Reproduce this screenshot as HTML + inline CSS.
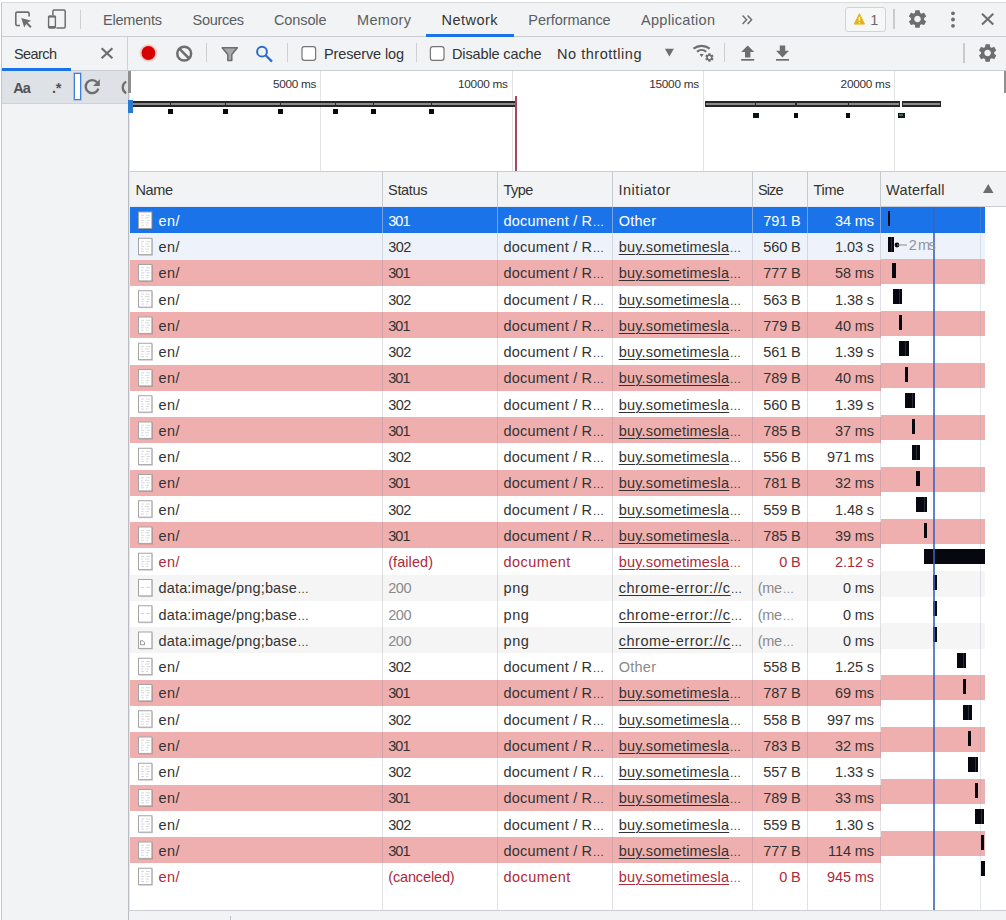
<!DOCTYPE html>
<html lang="en"><head><meta charset="utf-8"><title>DevTools - Network</title>
<style>
html,body{margin:0;padding:0;background:#fff}
#root{position:relative;width:1006px;height:920px;overflow:hidden;background:#fff;font-family:'Liberation Sans',sans-serif}
#root div,#root span,#root svg{position:absolute}
#root span{white-space:pre}
#root i{font-style:normal;font-size:11.7px;letter-spacing:0}
#root u{text-decoration:underline;text-underline-offset:1.5px;text-decoration-thickness:1px}
</style></head><body>
<div id="root">
<div style="left:1px;top:2px;width:1005px;height:918px;background:#f1f3f4;"></div>
<div style="left:1px;top:2px;width:1px;height:918px;background:#c4c4c4;"></div>
<div style="left:1px;top:2px;width:1005px;height:1px;background:#dadada;"></div>
<div style="left:2px;top:36px;width:1004px;height:1px;background:#cacdd1;"></div>
<div style="left:2px;top:70px;width:1004px;height:1px;background:#cacdd1;"></div>
<div style="left:2px;top:71px;width:126px;height:32px;background:#dee1e6;"></div>
<div style="left:2px;top:103px;width:126px;height:1px;background:#cfd2d6;"></div>
<div style="left:2px;top:68px;width:69px;height:3px;background:#1a73e8;"></div>
<div style="left:426px;top:34px;width:88px;height:3px;background:#1a73e8;"></div>
<div style="left:128px;top:71px;width:878px;height:840px;background:#fff;"></div>
<div style="left:128px;top:71px;width:1px;height:849px;background:#b9bcc0;"></div>
<div style="left:129px;top:71px;width:1px;height:840px;background:#e4e7ec;"></div>
<div style="left:128px;top:71px;width:3px;height:22px;background:#8f8f8f;"></div>
<div style="left:1004px;top:71px;width:2px;height:22px;background:#8f8f8f;"></div>
<div style="left:320px;top:71px;width:1px;height:100px;background:#e3e3e3;"></div>
<div style="left:512px;top:71px;width:1px;height:100px;background:#e3e3e3;"></div>
<div style="left:703px;top:71px;width:1px;height:100px;background:#e3e3e3;"></div>
<div style="left:894px;top:71px;width:1px;height:100px;background:#e3e3e3;"></div>
<div style="left:130px;top:171px;width:876px;height:1.6px;background:#cacdd1;"></div>
<div style="left:131px;top:101.4px;width:385.6px;height:5.5px;background:#262626;"></div>
<div style="left:132.2px;top:102.8px;width:383.20000000000005px;height:2.6px;background:#8a8a8a;"></div>
<div style="left:704.5px;top:101.4px;width:195.79999999999995px;height:5.5px;background:#262626;"></div>
<div style="left:705.7px;top:102.8px;width:193.39999999999995px;height:2.6px;background:#8a8a8a;"></div>
<div style="left:902px;top:101.4px;width:39px;height:5.5px;background:#262626;"></div>
<div style="left:903.2px;top:102.8px;width:36.6px;height:2.6px;background:#8a8a8a;"></div>
<div style="left:170.0px;top:101.5px;width:1.4px;height:5.2px;background:#2b2b2b;"></div>
<div style="left:224.6px;top:101.5px;width:1.4px;height:5.2px;background:#2b2b2b;"></div>
<div style="left:279.7px;top:101.5px;width:1.4px;height:5.2px;background:#2b2b2b;"></div>
<div style="left:334.7px;top:101.5px;width:1.4px;height:5.2px;background:#2b2b2b;"></div>
<div style="left:372.59999999999997px;top:101.5px;width:1.4px;height:5.2px;background:#2b2b2b;"></div>
<div style="left:430.59999999999997px;top:101.5px;width:1.4px;height:5.2px;background:#2b2b2b;"></div>
<div style="left:755.0px;top:101.5px;width:1.4px;height:5.2px;background:#2b2b2b;"></div>
<div style="left:795.4px;top:101.5px;width:1.4px;height:5.2px;background:#2b2b2b;"></div>
<div style="left:847.6px;top:101.5px;width:1.4px;height:5.2px;background:#2b2b2b;"></div>
<div style="left:168.29999999999998px;top:109px;width:4.8px;height:5.4px;background:#0a0a0a;"></div>
<div style="left:222.79999999999998px;top:109px;width:4.8px;height:5.4px;background:#0a0a0a;"></div>
<div style="left:277.90000000000003px;top:109px;width:4.8px;height:5.4px;background:#0a0a0a;"></div>
<div style="left:332.90000000000003px;top:109px;width:4.8px;height:5.4px;background:#0a0a0a;"></div>
<div style="left:370.8px;top:109px;width:4.8px;height:5.4px;background:#0a0a0a;"></div>
<div style="left:428.8px;top:109px;width:4.8px;height:5.4px;background:#0a0a0a;"></div>
<div style="left:752.9px;top:112.7px;width:5.9px;height:5.2px;background:#0c1410;"></div>
<div style="left:793.7px;top:112.7px;width:4.4px;height:5.2px;background:#0a0a0a;"></div>
<div style="left:845.9px;top:112.7px;width:4.6px;height:5.2px;background:#0a0a0a;"></div>
<div style="left:897.6px;top:112.7px;width:7.2px;height:5.2px;background:#0e1a15;"></div>
<div style="left:899.4px;top:114.1px;width:3.8px;height:2.4px;background:#2f6e50;"></div>
<div style="left:128px;top:100px;width:5px;height:13px;background:#2a7bd0;"></div>
<div style="left:514.5px;top:96px;width:2px;height:75px;background:#a6485f;"></div>
<div style="left:130px;top:172px;width:876px;height:34.5px;background:#f1f3f4;"></div>
<div style="left:130px;top:206px;width:751px;height:1px;background:#e6e9ee;"></div>
<div style="left:881px;top:206px;width:125px;height:1px;background:#cacdd1;"></div>
<div style="left:130px;top:207.0px;width:751px;height:26.25px;background:#1a73e8;"></div>
<div style="left:881px;top:207px;width:104px;height:26px;background:#1a73e8;"></div>
<div style="left:130px;top:233.25px;width:751px;height:26.25px;background:#eef2fa;"></div>
<div style="left:881px;top:233px;width:104px;height:26px;background:#eef2fa;"></div>
<div style="left:130px;top:259.5px;width:751px;height:26.25px;background:#f0afaf;"></div>
<div style="left:881px;top:259px;width:104px;height:25px;background:#f0afaf;"></div>
<div style="left:130px;top:312.0px;width:751px;height:26.25px;background:#f0afaf;"></div>
<div style="left:881px;top:311px;width:104px;height:25px;background:#f0afaf;"></div>
<div style="left:130px;top:364.5px;width:751px;height:26.25px;background:#f0afaf;"></div>
<div style="left:881px;top:363px;width:104px;height:25px;background:#f0afaf;"></div>
<div style="left:130px;top:417.0px;width:751px;height:26.25px;background:#f0afaf;"></div>
<div style="left:881px;top:415px;width:104px;height:25px;background:#f0afaf;"></div>
<div style="left:130px;top:469.5px;width:751px;height:26.25px;background:#f0afaf;"></div>
<div style="left:881px;top:467px;width:104px;height:25px;background:#f0afaf;"></div>
<div style="left:130px;top:522.0px;width:751px;height:26.25px;background:#f0afaf;"></div>
<div style="left:881px;top:519px;width:104px;height:25px;background:#f0afaf;"></div>
<div style="left:130px;top:574.5px;width:751px;height:26.25px;background:#f5f5f5;"></div>
<div style="left:881px;top:571px;width:104px;height:26px;background:#f5f5f5;"></div>
<div style="left:130px;top:627.0px;width:751px;height:26.25px;background:#f5f5f5;"></div>
<div style="left:881px;top:623px;width:104px;height:26px;background:#f5f5f5;"></div>
<div style="left:130px;top:679.5px;width:751px;height:26.25px;background:#f0afaf;"></div>
<div style="left:881px;top:675px;width:104px;height:25px;background:#f0afaf;"></div>
<div style="left:130px;top:732.0px;width:751px;height:26.25px;background:#f0afaf;"></div>
<div style="left:881px;top:727px;width:104px;height:25px;background:#f0afaf;"></div>
<div style="left:130px;top:784.5px;width:751px;height:26.25px;background:#f0afaf;"></div>
<div style="left:881px;top:779px;width:104px;height:25px;background:#f0afaf;"></div>
<div style="left:130px;top:837.0px;width:751px;height:26.25px;background:#f0afaf;"></div>
<div style="left:881px;top:831px;width:104px;height:25px;background:#f0afaf;"></div>
<div style="left:382px;top:172px;width:1px;height:35px;background:#c6c9cd;"></div>
<div style="left:382px;top:207px;width:1px;height:703px;background:rgba(120,120,130,0.22);"></div>
<div style="left:382px;top:207px;width:1px;height:26.25px;background:rgba(255,255,255,0.35);"></div>
<div style="left:497px;top:172px;width:1px;height:35px;background:#c6c9cd;"></div>
<div style="left:497px;top:207px;width:1px;height:703px;background:rgba(120,120,130,0.22);"></div>
<div style="left:497px;top:207px;width:1px;height:26.25px;background:rgba(255,255,255,0.35);"></div>
<div style="left:612px;top:172px;width:1px;height:35px;background:#c6c9cd;"></div>
<div style="left:612px;top:207px;width:1px;height:703px;background:rgba(120,120,130,0.22);"></div>
<div style="left:612px;top:207px;width:1px;height:26.25px;background:rgba(255,255,255,0.35);"></div>
<div style="left:752px;top:172px;width:1px;height:35px;background:#c6c9cd;"></div>
<div style="left:752px;top:207px;width:1px;height:703px;background:rgba(120,120,130,0.22);"></div>
<div style="left:752px;top:207px;width:1px;height:26.25px;background:rgba(255,255,255,0.35);"></div>
<div style="left:807px;top:172px;width:1px;height:35px;background:#c6c9cd;"></div>
<div style="left:807px;top:207px;width:1px;height:703px;background:rgba(120,120,130,0.22);"></div>
<div style="left:807px;top:207px;width:1px;height:26.25px;background:rgba(255,255,255,0.35);"></div>
<div style="left:880px;top:172px;width:1px;height:35px;background:#c6c9cd;"></div>
<div style="left:880px;top:207px;width:1px;height:703px;background:rgba(120,120,130,0.22);"></div>
<div style="left:880px;top:207px;width:1px;height:26.25px;background:rgba(255,255,255,0.35);"></div>
<div style="left:980px;top:207px;width:1px;height:703px;background:rgba(150,160,190,0.25);"></div>
<div style="left:128px;top:910px;width:878px;height:1px;background:#cacdd1;"></div>
<div style="left:129px;top:911px;width:877px;height:9px;background:#f1f3f4;"></div>
<div style="left:230px;top:916px;width:1px;height:4px;background:#c0c3c7;"></div>
<div style="left:887.7px;top:211px;width:2.3px;height:15px;background:#07070f;"></div>
<div style="left:887.7px;top:237px;width:6.8px;height:15px;background:#07070f;"></div>
<div style="left:891.3px;top:237px;width:1px;height:15px;background:#2a2d3a;"></div>
<div style="left:891.6px;top:263px;width:4.0px;height:15px;background:#07070f;"></div>
<div style="left:892.6px;top:289px;width:9.5px;height:15px;background:#07070f;"></div>
<div style="left:898.9px;top:289px;width:1px;height:15px;background:#2a2d3a;"></div>
<div style="left:899px;top:315px;width:3px;height:15px;background:#07070f;"></div>
<div style="left:899px;top:341px;width:9.5px;height:15px;background:#07070f;"></div>
<div style="left:905.3px;top:341px;width:1px;height:15px;background:#2a2d3a;"></div>
<div style="left:905.2px;top:367px;width:3.1px;height:15px;background:#07070f;"></div>
<div style="left:905.2px;top:393px;width:9.5px;height:15px;background:#07070f;"></div>
<div style="left:911.5px;top:393px;width:1px;height:15px;background:#2a2d3a;"></div>
<div style="left:911.7px;top:419px;width:3.2px;height:15px;background:#07070f;"></div>
<div style="left:911.7px;top:445px;width:7.9px;height:15px;background:#07070f;"></div>
<div style="left:916.4px;top:445px;width:1px;height:15px;background:#2a2d3a;"></div>
<div style="left:916.4px;top:471px;width:3.2px;height:15px;background:#07070f;"></div>
<div style="left:916.4px;top:497px;width:11.0px;height:15px;background:#07070f;"></div>
<div style="left:924.2px;top:497px;width:1px;height:15px;background:#2a2d3a;"></div>
<div style="left:924.2px;top:523px;width:3.2px;height:15px;background:#07070f;"></div>
<div style="left:923.9px;top:549px;width:60.9px;height:15px;background:#07070f;"></div>
<div style="left:933.4px;top:575px;width:4.0px;height:15px;background:#07070f;"></div>
<div style="left:933.4px;top:601px;width:4.0px;height:15px;background:#07070f;"></div>
<div style="left:933.4px;top:627px;width:4.0px;height:15px;background:#07070f;"></div>
<div style="left:956.8px;top:653px;width:9.7px;height:15px;background:#07070f;"></div>
<div style="left:963.3px;top:653px;width:1px;height:15px;background:#2a2d3a;"></div>
<div style="left:963.4px;top:679px;width:3.1px;height:15px;background:#07070f;"></div>
<div style="left:963.4px;top:705px;width:8.2px;height:15px;background:#07070f;"></div>
<div style="left:968.4px;top:705px;width:1px;height:15px;background:#2a2d3a;"></div>
<div style="left:968.4px;top:731px;width:2.9px;height:15px;background:#07070f;"></div>
<div style="left:968.4px;top:757px;width:9.3px;height:15px;background:#07070f;"></div>
<div style="left:974.5px;top:757px;width:1px;height:15px;background:#2a2d3a;"></div>
<div style="left:974.5px;top:783px;width:3.2px;height:15px;background:#07070f;"></div>
<div style="left:974.5px;top:809px;width:9.5px;height:15px;background:#07070f;"></div>
<div style="left:980.8px;top:809px;width:1px;height:15px;background:#2a2d3a;"></div>
<div style="left:980.8px;top:835px;width:3.7px;height:15px;background:#07070f;"></div>
<div style="left:981px;top:861px;width:4px;height:15px;background:#07070f;"></div>
<div style="left:933px;top:207px;width:2px;height:703px;background:rgba(58,98,188,0.8);"></div>
<div style="left:80px;top:9.5px;width:1px;height:19px;background:#cfcfcf;"></div>
<div style="left:845px;top:7px;width:39px;height:23px;border:1px solid #d3d3d3;border-radius:3px;background:#f6f7f7"></div>
<div style="left:893px;top:9px;width:2px;height:19.5px;background:#cbcbcb;"></div>
<div style="left:127px;top:37px;width:1px;height:34px;background:#cdd0d4;"></div>
<div style="left:206px;top:43.3px;width:1px;height:18.7px;background:#cfcfcf;"></div>
<div style="left:287px;top:43.3px;width:1px;height:18.7px;background:#cfcfcf;"></div>
<div style="left:416px;top:43.3px;width:1px;height:18.7px;background:#cfcfcf;"></div>
<div style="left:724px;top:43.3px;width:1px;height:18.7px;background:#cfcfcf;"></div>
<div style="left:963.4px;top:43.3px;width:1.5px;height:19.4px;background:#cbcbcb;"></div>
<div style="left:73.5px;top:72.5px;width:5.4px;height:25.4px;border:1px solid #3f7fdc;background:#fff;box-shadow:0 0 0 0.6px rgba(63,127,220,.5)"></div>
<svg width="1006" height="920" viewBox="0 0 1006 920" style="left:0;top:0">
<path d="M983 192.9 L993.5 192.9 L988.25 184 Z" fill="#6c6c6c"/>
<g transform="translate(138,211.3)"><rect x="1.2" y="1.4" width="13.8" height="16.8" fill="rgba(0,0,0,0.16)"/><rect x="0.5" y="0.7" width="13.4" height="16.4" fill="#fff" stroke="#a4a4a4" stroke-width="1"/><path d="M3 4 H6 M8 4 H12 M3 6.5 H5 M7 6.5 H11.5 M3 9 H6.5 M8.5 9 H12 M3 11.5 H5.5 M7.5 11.5 H11 M3 14 H6 M8 14 H10" stroke="#d9d9d9" stroke-width="1"/></g>
<g transform="translate(138,237.55)"><rect x="1.2" y="1.4" width="13.8" height="16.8" fill="rgba(0,0,0,0.16)"/><rect x="0.5" y="0.7" width="13.4" height="16.4" fill="#fff" stroke="#a4a4a4" stroke-width="1"/><path d="M3 4 H6 M8 4 H12 M3 6.5 H5 M7 6.5 H11.5 M3 9 H6.5 M8.5 9 H12 M3 11.5 H5.5 M7.5 11.5 H11 M3 14 H6 M8 14 H10" stroke="#d9d9d9" stroke-width="1"/></g>
<g transform="translate(138,263.8)"><rect x="1.2" y="1.4" width="13.8" height="16.8" fill="rgba(0,0,0,0.16)"/><rect x="0.5" y="0.7" width="13.4" height="16.4" fill="#fff" stroke="#a4a4a4" stroke-width="1"/><path d="M3 4 H6 M8 4 H12 M3 6.5 H5 M7 6.5 H11.5 M3 9 H6.5 M8.5 9 H12 M3 11.5 H5.5 M7.5 11.5 H11 M3 14 H6 M8 14 H10" stroke="#d9d9d9" stroke-width="1"/></g>
<g transform="translate(138,290.05)"><rect x="1.2" y="1.4" width="13.8" height="16.8" fill="rgba(0,0,0,0.16)"/><rect x="0.5" y="0.7" width="13.4" height="16.4" fill="#fff" stroke="#a4a4a4" stroke-width="1"/><path d="M3 4 H6 M8 4 H12 M3 6.5 H5 M7 6.5 H11.5 M3 9 H6.5 M8.5 9 H12 M3 11.5 H5.5 M7.5 11.5 H11 M3 14 H6 M8 14 H10" stroke="#d9d9d9" stroke-width="1"/></g>
<g transform="translate(138,316.3)"><rect x="1.2" y="1.4" width="13.8" height="16.8" fill="rgba(0,0,0,0.16)"/><rect x="0.5" y="0.7" width="13.4" height="16.4" fill="#fff" stroke="#a4a4a4" stroke-width="1"/><path d="M3 4 H6 M8 4 H12 M3 6.5 H5 M7 6.5 H11.5 M3 9 H6.5 M8.5 9 H12 M3 11.5 H5.5 M7.5 11.5 H11 M3 14 H6 M8 14 H10" stroke="#d9d9d9" stroke-width="1"/></g>
<g transform="translate(138,342.55)"><rect x="1.2" y="1.4" width="13.8" height="16.8" fill="rgba(0,0,0,0.16)"/><rect x="0.5" y="0.7" width="13.4" height="16.4" fill="#fff" stroke="#a4a4a4" stroke-width="1"/><path d="M3 4 H6 M8 4 H12 M3 6.5 H5 M7 6.5 H11.5 M3 9 H6.5 M8.5 9 H12 M3 11.5 H5.5 M7.5 11.5 H11 M3 14 H6 M8 14 H10" stroke="#d9d9d9" stroke-width="1"/></g>
<g transform="translate(138,368.8)"><rect x="1.2" y="1.4" width="13.8" height="16.8" fill="rgba(0,0,0,0.16)"/><rect x="0.5" y="0.7" width="13.4" height="16.4" fill="#fff" stroke="#a4a4a4" stroke-width="1"/><path d="M3 4 H6 M8 4 H12 M3 6.5 H5 M7 6.5 H11.5 M3 9 H6.5 M8.5 9 H12 M3 11.5 H5.5 M7.5 11.5 H11 M3 14 H6 M8 14 H10" stroke="#d9d9d9" stroke-width="1"/></g>
<g transform="translate(138,395.05)"><rect x="1.2" y="1.4" width="13.8" height="16.8" fill="rgba(0,0,0,0.16)"/><rect x="0.5" y="0.7" width="13.4" height="16.4" fill="#fff" stroke="#a4a4a4" stroke-width="1"/><path d="M3 4 H6 M8 4 H12 M3 6.5 H5 M7 6.5 H11.5 M3 9 H6.5 M8.5 9 H12 M3 11.5 H5.5 M7.5 11.5 H11 M3 14 H6 M8 14 H10" stroke="#d9d9d9" stroke-width="1"/></g>
<g transform="translate(138,421.3)"><rect x="1.2" y="1.4" width="13.8" height="16.8" fill="rgba(0,0,0,0.16)"/><rect x="0.5" y="0.7" width="13.4" height="16.4" fill="#fff" stroke="#a4a4a4" stroke-width="1"/><path d="M3 4 H6 M8 4 H12 M3 6.5 H5 M7 6.5 H11.5 M3 9 H6.5 M8.5 9 H12 M3 11.5 H5.5 M7.5 11.5 H11 M3 14 H6 M8 14 H10" stroke="#d9d9d9" stroke-width="1"/></g>
<g transform="translate(138,447.55)"><rect x="1.2" y="1.4" width="13.8" height="16.8" fill="rgba(0,0,0,0.16)"/><rect x="0.5" y="0.7" width="13.4" height="16.4" fill="#fff" stroke="#a4a4a4" stroke-width="1"/><path d="M3 4 H6 M8 4 H12 M3 6.5 H5 M7 6.5 H11.5 M3 9 H6.5 M8.5 9 H12 M3 11.5 H5.5 M7.5 11.5 H11 M3 14 H6 M8 14 H10" stroke="#d9d9d9" stroke-width="1"/></g>
<g transform="translate(138,473.8)"><rect x="1.2" y="1.4" width="13.8" height="16.8" fill="rgba(0,0,0,0.16)"/><rect x="0.5" y="0.7" width="13.4" height="16.4" fill="#fff" stroke="#a4a4a4" stroke-width="1"/><path d="M3 4 H6 M8 4 H12 M3 6.5 H5 M7 6.5 H11.5 M3 9 H6.5 M8.5 9 H12 M3 11.5 H5.5 M7.5 11.5 H11 M3 14 H6 M8 14 H10" stroke="#d9d9d9" stroke-width="1"/></g>
<g transform="translate(138,500.05)"><rect x="1.2" y="1.4" width="13.8" height="16.8" fill="rgba(0,0,0,0.16)"/><rect x="0.5" y="0.7" width="13.4" height="16.4" fill="#fff" stroke="#a4a4a4" stroke-width="1"/><path d="M3 4 H6 M8 4 H12 M3 6.5 H5 M7 6.5 H11.5 M3 9 H6.5 M8.5 9 H12 M3 11.5 H5.5 M7.5 11.5 H11 M3 14 H6 M8 14 H10" stroke="#d9d9d9" stroke-width="1"/></g>
<g transform="translate(138,526.3)"><rect x="1.2" y="1.4" width="13.8" height="16.8" fill="rgba(0,0,0,0.16)"/><rect x="0.5" y="0.7" width="13.4" height="16.4" fill="#fff" stroke="#a4a4a4" stroke-width="1"/><path d="M3 4 H6 M8 4 H12 M3 6.5 H5 M7 6.5 H11.5 M3 9 H6.5 M8.5 9 H12 M3 11.5 H5.5 M7.5 11.5 H11 M3 14 H6 M8 14 H10" stroke="#d9d9d9" stroke-width="1"/></g>
<g transform="translate(138,552.55)"><rect x="1.2" y="1.4" width="13.8" height="16.8" fill="rgba(0,0,0,0.16)"/><rect x="0.5" y="0.7" width="13.4" height="16.4" fill="#fff" stroke="#a4a4a4" stroke-width="1"/><path d="M3 4 H6 M8 4 H12 M3 6.5 H5 M7 6.5 H11.5 M3 9 H6.5 M8.5 9 H12 M3 11.5 H5.5 M7.5 11.5 H11 M3 14 H6 M8 14 H10" stroke="#d9d9d9" stroke-width="1"/></g>
<g transform="translate(138,578.8)"><rect x="1.2" y="1.4" width="13.8" height="16.8" fill="rgba(0,0,0,0.16)"/><rect x="0.5" y="0.7" width="13.4" height="16.4" fill="#fff" stroke="#a4a4a4" stroke-width="1"/><path d="M2.5 8.5 H6.3 M8.3 8.5 H12" stroke="#d4d4d4" stroke-width="1"/></g>
<g transform="translate(138,605.05)"><rect x="1.2" y="1.4" width="13.8" height="16.8" fill="rgba(0,0,0,0.16)"/><rect x="0.5" y="0.7" width="13.4" height="16.4" fill="#fff" stroke="#a4a4a4" stroke-width="1"/><path d="M2.5 8.5 H6.3 M8.3 8.5 H12" stroke="#d4d4d4" stroke-width="1"/></g>
<g transform="translate(138,631.3)"><rect x="1.2" y="1.4" width="13.8" height="16.8" fill="rgba(0,0,0,0.16)"/><rect x="0.5" y="0.7" width="13.4" height="16.4" fill="#fff" stroke="#a4a4a4" stroke-width="1"/><path d="M2.5 13.5 V9.5 H5 L6.5 11 V13.5 Z" fill="none" stroke="#8a8a8a" stroke-width="0.9"/></g>
<g transform="translate(138,657.55)"><rect x="1.2" y="1.4" width="13.8" height="16.8" fill="rgba(0,0,0,0.16)"/><rect x="0.5" y="0.7" width="13.4" height="16.4" fill="#fff" stroke="#a4a4a4" stroke-width="1"/><path d="M3 4 H6 M8 4 H12 M3 6.5 H5 M7 6.5 H11.5 M3 9 H6.5 M8.5 9 H12 M3 11.5 H5.5 M7.5 11.5 H11 M3 14 H6 M8 14 H10" stroke="#d9d9d9" stroke-width="1"/></g>
<g transform="translate(138,683.8)"><rect x="1.2" y="1.4" width="13.8" height="16.8" fill="rgba(0,0,0,0.16)"/><rect x="0.5" y="0.7" width="13.4" height="16.4" fill="#fff" stroke="#a4a4a4" stroke-width="1"/><path d="M3 4 H6 M8 4 H12 M3 6.5 H5 M7 6.5 H11.5 M3 9 H6.5 M8.5 9 H12 M3 11.5 H5.5 M7.5 11.5 H11 M3 14 H6 M8 14 H10" stroke="#d9d9d9" stroke-width="1"/></g>
<g transform="translate(138,710.05)"><rect x="1.2" y="1.4" width="13.8" height="16.8" fill="rgba(0,0,0,0.16)"/><rect x="0.5" y="0.7" width="13.4" height="16.4" fill="#fff" stroke="#a4a4a4" stroke-width="1"/><path d="M3 4 H6 M8 4 H12 M3 6.5 H5 M7 6.5 H11.5 M3 9 H6.5 M8.5 9 H12 M3 11.5 H5.5 M7.5 11.5 H11 M3 14 H6 M8 14 H10" stroke="#d9d9d9" stroke-width="1"/></g>
<g transform="translate(138,736.3)"><rect x="1.2" y="1.4" width="13.8" height="16.8" fill="rgba(0,0,0,0.16)"/><rect x="0.5" y="0.7" width="13.4" height="16.4" fill="#fff" stroke="#a4a4a4" stroke-width="1"/><path d="M3 4 H6 M8 4 H12 M3 6.5 H5 M7 6.5 H11.5 M3 9 H6.5 M8.5 9 H12 M3 11.5 H5.5 M7.5 11.5 H11 M3 14 H6 M8 14 H10" stroke="#d9d9d9" stroke-width="1"/></g>
<g transform="translate(138,762.55)"><rect x="1.2" y="1.4" width="13.8" height="16.8" fill="rgba(0,0,0,0.16)"/><rect x="0.5" y="0.7" width="13.4" height="16.4" fill="#fff" stroke="#a4a4a4" stroke-width="1"/><path d="M3 4 H6 M8 4 H12 M3 6.5 H5 M7 6.5 H11.5 M3 9 H6.5 M8.5 9 H12 M3 11.5 H5.5 M7.5 11.5 H11 M3 14 H6 M8 14 H10" stroke="#d9d9d9" stroke-width="1"/></g>
<g transform="translate(138,788.8)"><rect x="1.2" y="1.4" width="13.8" height="16.8" fill="rgba(0,0,0,0.16)"/><rect x="0.5" y="0.7" width="13.4" height="16.4" fill="#fff" stroke="#a4a4a4" stroke-width="1"/><path d="M3 4 H6 M8 4 H12 M3 6.5 H5 M7 6.5 H11.5 M3 9 H6.5 M8.5 9 H12 M3 11.5 H5.5 M7.5 11.5 H11 M3 14 H6 M8 14 H10" stroke="#d9d9d9" stroke-width="1"/></g>
<g transform="translate(138,815.05)"><rect x="1.2" y="1.4" width="13.8" height="16.8" fill="rgba(0,0,0,0.16)"/><rect x="0.5" y="0.7" width="13.4" height="16.4" fill="#fff" stroke="#a4a4a4" stroke-width="1"/><path d="M3 4 H6 M8 4 H12 M3 6.5 H5 M7 6.5 H11.5 M3 9 H6.5 M8.5 9 H12 M3 11.5 H5.5 M7.5 11.5 H11 M3 14 H6 M8 14 H10" stroke="#d9d9d9" stroke-width="1"/></g>
<g transform="translate(138,841.3)"><rect x="1.2" y="1.4" width="13.8" height="16.8" fill="rgba(0,0,0,0.16)"/><rect x="0.5" y="0.7" width="13.4" height="16.4" fill="#fff" stroke="#a4a4a4" stroke-width="1"/><path d="M3 4 H6 M8 4 H12 M3 6.5 H5 M7 6.5 H11.5 M3 9 H6.5 M8.5 9 H12 M3 11.5 H5.5 M7.5 11.5 H11 M3 14 H6 M8 14 H10" stroke="#d9d9d9" stroke-width="1"/></g>
<g transform="translate(138,867.55)"><rect x="1.2" y="1.4" width="13.8" height="16.8" fill="rgba(0,0,0,0.16)"/><rect x="0.5" y="0.7" width="13.4" height="16.4" fill="#fff" stroke="#a4a4a4" stroke-width="1"/><path d="M3 4 H6 M8 4 H12 M3 6.5 H5 M7 6.5 H11.5 M3 9 H6.5 M8.5 9 H12 M3 11.5 H5.5 M7.5 11.5 H11 M3 14 H6 M8 14 H10" stroke="#d9d9d9" stroke-width="1"/></g>
<circle cx="897" cy="245" r="2.4" fill="#0a0a0a"/><path d="M897 245 H907" stroke="#8a8a8a" stroke-width="1"/>
<path d="M742.6 15.4 L746.6 19.7 L742.6 24 M747.6 15.4 L751.6 19.7 L747.6 24" fill="none" stroke="#6e6e6e" stroke-width="1.5"/>
<path d="M20 25.5 H17.2 a1.4 1.4 0 0 1 -1.4 -1.4 V13.5 a1.4 1.4 0 0 1 1.4 -1.4 H27.7 a1.4 1.4 0 0 1 1.4 1.4 V16.4" fill="none" stroke="#6e6e6e" stroke-width="1.6"/><path d="M21.3 18 L31.2 20.8 L27.6 22.6 L31.6 26.6 L30.2 28 L26.2 24 L24.2 27.4 Z" fill="#6e6e6e"/>
<path d="M52.9 15 V11.2 a1.2 1.2 0 0 1 1.2 -1.2 H64 a1.2 1.2 0 0 1 1.2 1.2 V26.8 a1.2 1.2 0 0 1 -1.2 1.2 H56.4" fill="none" stroke="#6e6e6e" stroke-width="1.5"/><rect x="47.9" y="15.2" width="8.2" height="13.5" rx="1.6" fill="#6e6e6e"/><rect x="49.3" y="17.6" width="5.4" height="8.4" fill="#f1f3f4"/>
<path d="M859.4 13.7 L864.5 24.1 H854.3 Z" fill="#e6b417" stroke="#e6b417" stroke-width="1" stroke-linejoin="round"/><path d="M859.4 16.8 V20.8" stroke="#fff" stroke-width="1.4"/><circle cx="859.4" cy="22.7" r="0.8" fill="#fff"/>
<path transform="translate(906.50,7.95) scale(0.917)" d="M19.14,12.94c0.04-0.3,0.06-0.61,0.06-0.94c0-0.32-0.02-0.64-0.07-0.94l2.03-1.58c0.18-0.14,0.23-0.41,0.12-0.61 l-1.92-3.32c-0.12-0.22-0.37-0.29-0.59-0.22l-2.39,0.96c-0.5-0.38-1.03-0.7-1.62-0.94L14.4,2.81c-0.04-0.24-0.24-0.41-0.48-0.41 h-3.84c-0.24,0-0.43,0.17-0.47,0.41L9.25,5.35C8.66,5.59,8.12,5.92,7.63,6.29L5.24,5.33c-0.22-0.08-0.47,0-0.59,0.22L2.74,8.87 C2.62,9.08,2.66,9.34,2.86,9.48l2.03,1.58C4.84,11.36,4.8,11.69,4.8,12s0.02,0.64,0.07,0.94l-2.03,1.58 c-0.18,0.14-0.23,0.41-0.12,0.61l1.92,3.32c0.12,0.22,0.37,0.29,0.59,0.22l2.39-0.96c0.5,0.38,1.03,0.7,1.62,0.94l0.36,2.54 c0.05,0.24,0.24,0.41,0.48,0.41h3.84c0.24,0,0.44-0.17,0.47-0.41l0.36-2.54c0.59-0.24,1.13-0.56,1.62-0.94l2.39,0.96 c0.22,0.08,0.47,0,0.59-0.22l1.92-3.32c0.12-0.22,0.07-0.47-0.12-0.61L19.14,12.94z M12,15.6c-1.98,0-3.6-1.62-3.6-3.6 s1.62-3.6,3.6-3.6s3.6,1.62,3.6,3.6S13.98,15.6,12,15.6z" fill="#6e6e6e"/>
<path transform="translate(976.60,42.00) scale(0.917)" d="M19.14,12.94c0.04-0.3,0.06-0.61,0.06-0.94c0-0.32-0.02-0.64-0.07-0.94l2.03-1.58c0.18-0.14,0.23-0.41,0.12-0.61 l-1.92-3.32c-0.12-0.22-0.37-0.29-0.59-0.22l-2.39,0.96c-0.5-0.38-1.03-0.7-1.62-0.94L14.4,2.81c-0.04-0.24-0.24-0.41-0.48-0.41 h-3.84c-0.24,0-0.43,0.17-0.47,0.41L9.25,5.35C8.66,5.59,8.12,5.92,7.63,6.29L5.24,5.33c-0.22-0.08-0.47,0-0.59,0.22L2.74,8.87 C2.62,9.08,2.66,9.34,2.86,9.48l2.03,1.58C4.84,11.36,4.8,11.69,4.8,12s0.02,0.64,0.07,0.94l-2.03,1.58 c-0.18,0.14-0.23,0.41-0.12,0.61l1.92,3.32c0.12,0.22,0.37,0.29,0.59,0.22l2.39-0.96c0.5,0.38,1.03,0.7,1.62,0.94l0.36,2.54 c0.05,0.24,0.24,0.41,0.48,0.41h3.84c0.24,0,0.44-0.17,0.47-0.41l0.36-2.54c0.59-0.24,1.13-0.56,1.62-0.94l2.39,0.96 c0.22,0.08,0.47,0,0.59-0.22l1.92-3.32c0.12-0.22,0.07-0.47-0.12-0.61L19.14,12.94z M12,15.6c-1.98,0-3.6-1.62-3.6-3.6 s1.62-3.6,3.6-3.6s3.6,1.62,3.6,3.6S13.98,15.6,12,15.6z" fill="#6e6e6e"/>
<circle cx="953" cy="13.3" r="1.9" fill="#6e6e6e"/>
<circle cx="953" cy="19.5" r="1.9" fill="#6e6e6e"/>
<circle cx="953" cy="25.8" r="1.9" fill="#6e6e6e"/>
<path d="M982 13.8 L993.3 24.6 M993.3 13.8 L982 24.6" stroke="#6e6e6e" stroke-width="2.1"/>
<path d="M101.6 48.3 L112.4 58.3 M112.4 48.3 L101.6 58.3" stroke="#6e6e6e" stroke-width="2.2"/>
<circle cx="148.4" cy="53" r="8.8" fill="rgba(255,60,60,0.22)"/><circle cx="148.4" cy="53" r="6.9" fill="#d60000"/>
<circle cx="184.2" cy="53.6" r="6.95" fill="none" stroke="#6e6e6e" stroke-width="2.5"/><path d="M179.3 48.7 L189.1 58.5" stroke="#6e6e6e" stroke-width="2.5"/>
<path d="M222.2 47.8 H237.4 L231.8 54.6 V60.4 H227.8 V54.6 Z" fill="#a9a9a9" stroke="#6e6e6e" stroke-width="1.5" stroke-linejoin="round"/>
<circle cx="262" cy="51.7" r="4.9" fill="none" stroke="#2a6ad0" stroke-width="2"/><path d="M265.6 55.3 L272 61.6" stroke="#2a6ad0" stroke-width="2.3"/>
<rect x="302.0" y="46.7" width="13.6" height="13.6" rx="2.4" fill="#fff" stroke="#767676" stroke-width="1.2"/>
<rect x="430.40000000000003" y="46.7" width="13.6" height="13.6" rx="2.4" fill="#fff" stroke="#767676" stroke-width="1.2"/>
<path d="M664.9 48.8 H673.9 L669.4 56.6 Z" fill="#6e6e6e"/>
<path d="M693.5 48.7 A13.1 13.1 0 0 1 709.7 48.7 M697 51.7 A7.1 7.1 0 0 1 706.2 51.7" fill="none" stroke="#6e6e6e" stroke-width="2.1"/><path d="M699.6 54.4 Q701.6 53.2 703.6 54.4 L701.6 57 Z" fill="#6e6e6e"/>
<path transform="translate(704.12,52.22) scale(0.44)" d="M19.14,12.94c0.04-0.3,0.06-0.61,0.06-0.94c0-0.32-0.02-0.64-0.07-0.94l2.03-1.58c0.18-0.14,0.23-0.41,0.12-0.61 l-1.92-3.32c-0.12-0.22-0.37-0.29-0.59-0.22l-2.39,0.96c-0.5-0.38-1.03-0.7-1.62-0.94L14.4,2.81c-0.04-0.24-0.24-0.41-0.48-0.41 h-3.84c-0.24,0-0.43,0.17-0.47,0.41L9.25,5.35C8.66,5.59,8.12,5.92,7.63,6.29L5.24,5.33c-0.22-0.08-0.47,0-0.59,0.22L2.74,8.87 C2.62,9.08,2.66,9.34,2.86,9.48l2.03,1.58C4.84,11.36,4.8,11.69,4.8,12s0.02,0.64,0.07,0.94l-2.03,1.58 c-0.18,0.14-0.23,0.41-0.12,0.61l1.92,3.32c0.12,0.22,0.37,0.29,0.59,0.22l2.39-0.96c0.5,0.38,1.03,0.7,1.62,0.94l0.36,2.54 c0.05,0.24,0.24,0.41,0.48,0.41h3.84c0.24,0,0.44-0.17,0.47-0.41l0.36-2.54c0.59-0.24,1.13-0.56,1.62-0.94l2.39,0.96 c0.22,0.08,0.47,0,0.59-0.22l1.92-3.32c0.12-0.22,0.07-0.47-0.12-0.61L19.14,12.94z M12,15.6c-1.98,0-3.6-1.62-3.6-3.6 s1.62-3.6,3.6-3.6s3.6,1.62,3.6,3.6S13.98,15.6,12,15.6z" fill="#6e6e6e"/>
<path d="M747.7 45.4 L754.2 52 H750.4 V57.4 H745 V52 H741.2 Z" fill="#6e6e6e"/><rect x="741.2" y="59" width="13" height="1.7" fill="#6e6e6e"/>
<path d="M782.5 57.4 L789 50.8 H785.2 V45.4 H779.8 V50.8 H776 Z" fill="#6e6e6e"/><rect x="776" y="59" width="13" height="1.7" fill="#6e6e6e"/>
<path d="M97.1 82.3 A6.5 6.5 0 1 0 98.4 88.6" fill="none" stroke="#6e6e6e" stroke-width="2.4"/><path d="M99.8 79.2 V86 H93 Z" fill="#6e6e6e"/>
<path d="M126.2 81.6 A6.6 6.6 0 0 0 126.2 93.2" fill="none" stroke="#6e6e6e" stroke-width="2.2"/>
</svg>
<span style="left:273.00px;top:73.31px;font-size:11.8px;line-height:23.6px;color:#333;letter-spacing:-0.292px;">5000 ms</span>
<span style="left:458.00px;top:73.31px;font-size:11.8px;line-height:23.6px;color:#333;letter-spacing:-0.259px;">10000 ms</span>
<span style="left:649.20px;top:73.31px;font-size:11.8px;line-height:23.6px;color:#333;letter-spacing:-0.259px;">15000 ms</span>
<span style="left:840.60px;top:73.31px;font-size:11.8px;line-height:23.6px;color:#333;letter-spacing:-0.259px;">20000 ms</span>
<span style="left:135.50px;top:175.78px;font-size:14.5px;line-height:29.0px;color:#333;letter-spacing:-0.396px;">Name</span>
<span style="left:388.10px;top:175.78px;font-size:14.5px;line-height:29.0px;color:#333;letter-spacing:-0.362px;">Status</span>
<span style="left:503.60px;top:175.78px;font-size:14.5px;line-height:29.0px;color:#333;letter-spacing:-0.579px;">Type</span>
<span style="left:618.40px;top:175.78px;font-size:14.5px;line-height:29.0px;color:#333;letter-spacing:0.555px;">Initiator</span>
<span style="left:757.90px;top:175.78px;font-size:14.5px;line-height:29.0px;color:#333;letter-spacing:-0.84px;">Size</span>
<span style="left:813.60px;top:175.78px;font-size:14.5px;line-height:29.0px;color:#333;letter-spacing:-0.329px;">Time</span>
<span style="left:886.10px;top:175.78px;font-size:14.5px;line-height:29.0px;color:#333;letter-spacing:0.216px;">Waterfall</span>
<span style="left:158.50px;top:206.78px;font-size:14.5px;line-height:29.0px;color:#fff;letter-spacing:0.414px;">en/</span>
<span style="left:388.20px;top:206.78px;font-size:14.5px;line-height:29.0px;color:#fff;letter-spacing:-0.902px;">301</span>
<span style="left:503.50px;top:206.78px;font-size:14.5px;line-height:29.0px;color:#fff;letter-spacing:0.214px;">document / R<i style="margin-left:0.2px">…</i></span>
<span style="left:618.70px;top:206.78px;font-size:14.5px;line-height:29.0px;color:#fff;letter-spacing:0.259px;">Other</span>
<span style="left:763.37px;top:206.78px;font-size:14.5px;line-height:29.0px;color:#fff;letter-spacing:-0.12px;">791 B</span>
<span style="left:834.98px;top:206.78px;font-size:14.5px;line-height:29.0px;color:#fff;letter-spacing:-0.12px;">34 ms</span>
<span style="left:158.50px;top:233.03px;font-size:14.5px;line-height:29.0px;color:#333;letter-spacing:0.414px;">en/</span>
<span style="left:388.20px;top:233.03px;font-size:14.5px;line-height:29.0px;color:#333;letter-spacing:-0.502px;">302</span>
<span style="left:503.50px;top:233.03px;font-size:14.5px;line-height:29.0px;color:#333;letter-spacing:0.214px;">document / R<i style="margin-left:0.2px">…</i></span>
<span style="left:618.70px;top:233.03px;font-size:14.5px;line-height:29.0px;color:#333;letter-spacing:0.184px;"><u>buy.sometimesla</u><i style="margin-left:0.23px">…</i></span>
<span style="left:763.37px;top:233.03px;font-size:14.5px;line-height:29.0px;color:#333;letter-spacing:-0.12px;">560 B</span>
<span style="left:835.10px;top:233.03px;font-size:14.5px;line-height:29.0px;color:#333;letter-spacing:-0.12px;">1.03 s</span>
<span style="left:158.50px;top:259.28px;font-size:14.5px;line-height:29.0px;color:#333;letter-spacing:0.414px;">en/</span>
<span style="left:388.20px;top:259.28px;font-size:14.5px;line-height:29.0px;color:#333;letter-spacing:-0.902px;">301</span>
<span style="left:503.50px;top:259.28px;font-size:14.5px;line-height:29.0px;color:#333;letter-spacing:0.214px;">document / R<i style="margin-left:0.2px">…</i></span>
<span style="left:618.70px;top:259.28px;font-size:14.5px;line-height:29.0px;color:#333;letter-spacing:0.184px;"><u>buy.sometimesla</u><i style="margin-left:0.23px">…</i></span>
<span style="left:763.37px;top:259.28px;font-size:14.5px;line-height:29.0px;color:#333;letter-spacing:-0.12px;">777 B</span>
<span style="left:834.98px;top:259.28px;font-size:14.5px;line-height:29.0px;color:#333;letter-spacing:-0.12px;">58 ms</span>
<span style="left:158.50px;top:285.53px;font-size:14.5px;line-height:29.0px;color:#333;letter-spacing:0.414px;">en/</span>
<span style="left:388.20px;top:285.53px;font-size:14.5px;line-height:29.0px;color:#333;letter-spacing:-0.502px;">302</span>
<span style="left:503.50px;top:285.53px;font-size:14.5px;line-height:29.0px;color:#333;letter-spacing:0.214px;">document / R<i style="margin-left:0.2px">…</i></span>
<span style="left:618.70px;top:285.53px;font-size:14.5px;line-height:29.0px;color:#333;letter-spacing:0.184px;"><u>buy.sometimesla</u><i style="margin-left:0.23px">…</i></span>
<span style="left:763.37px;top:285.53px;font-size:14.5px;line-height:29.0px;color:#333;letter-spacing:-0.12px;">563 B</span>
<span style="left:835.10px;top:285.53px;font-size:14.5px;line-height:29.0px;color:#333;letter-spacing:-0.12px;">1.38 s</span>
<span style="left:158.50px;top:311.78px;font-size:14.5px;line-height:29.0px;color:#333;letter-spacing:0.414px;">en/</span>
<span style="left:388.20px;top:311.78px;font-size:14.5px;line-height:29.0px;color:#333;letter-spacing:-0.902px;">301</span>
<span style="left:503.50px;top:311.78px;font-size:14.5px;line-height:29.0px;color:#333;letter-spacing:0.214px;">document / R<i style="margin-left:0.2px">…</i></span>
<span style="left:618.70px;top:311.78px;font-size:14.5px;line-height:29.0px;color:#333;letter-spacing:0.184px;"><u>buy.sometimesla</u><i style="margin-left:0.23px">…</i></span>
<span style="left:763.37px;top:311.78px;font-size:14.5px;line-height:29.0px;color:#333;letter-spacing:-0.12px;">779 B</span>
<span style="left:834.98px;top:311.78px;font-size:14.5px;line-height:29.0px;color:#333;letter-spacing:-0.12px;">40 ms</span>
<span style="left:158.50px;top:338.03px;font-size:14.5px;line-height:29.0px;color:#333;letter-spacing:0.414px;">en/</span>
<span style="left:388.20px;top:338.03px;font-size:14.5px;line-height:29.0px;color:#333;letter-spacing:-0.502px;">302</span>
<span style="left:503.50px;top:338.03px;font-size:14.5px;line-height:29.0px;color:#333;letter-spacing:0.214px;">document / R<i style="margin-left:0.2px">…</i></span>
<span style="left:618.70px;top:338.03px;font-size:14.5px;line-height:29.0px;color:#333;letter-spacing:0.184px;"><u>buy.sometimesla</u><i style="margin-left:0.23px">…</i></span>
<span style="left:763.37px;top:338.03px;font-size:14.5px;line-height:29.0px;color:#333;letter-spacing:-0.12px;">561 B</span>
<span style="left:835.10px;top:338.03px;font-size:14.5px;line-height:29.0px;color:#333;letter-spacing:-0.12px;">1.39 s</span>
<span style="left:158.50px;top:364.28px;font-size:14.5px;line-height:29.0px;color:#333;letter-spacing:0.414px;">en/</span>
<span style="left:388.20px;top:364.28px;font-size:14.5px;line-height:29.0px;color:#333;letter-spacing:-0.902px;">301</span>
<span style="left:503.50px;top:364.28px;font-size:14.5px;line-height:29.0px;color:#333;letter-spacing:0.214px;">document / R<i style="margin-left:0.2px">…</i></span>
<span style="left:618.70px;top:364.28px;font-size:14.5px;line-height:29.0px;color:#333;letter-spacing:0.184px;"><u>buy.sometimesla</u><i style="margin-left:0.23px">…</i></span>
<span style="left:763.37px;top:364.28px;font-size:14.5px;line-height:29.0px;color:#333;letter-spacing:-0.12px;">789 B</span>
<span style="left:834.98px;top:364.28px;font-size:14.5px;line-height:29.0px;color:#333;letter-spacing:-0.12px;">40 ms</span>
<span style="left:158.50px;top:390.53px;font-size:14.5px;line-height:29.0px;color:#333;letter-spacing:0.414px;">en/</span>
<span style="left:388.20px;top:390.53px;font-size:14.5px;line-height:29.0px;color:#333;letter-spacing:-0.502px;">302</span>
<span style="left:503.50px;top:390.53px;font-size:14.5px;line-height:29.0px;color:#333;letter-spacing:0.214px;">document / R<i style="margin-left:0.2px">…</i></span>
<span style="left:618.70px;top:390.53px;font-size:14.5px;line-height:29.0px;color:#333;letter-spacing:0.184px;"><u>buy.sometimesla</u><i style="margin-left:0.23px">…</i></span>
<span style="left:763.37px;top:390.53px;font-size:14.5px;line-height:29.0px;color:#333;letter-spacing:-0.12px;">560 B</span>
<span style="left:835.10px;top:390.53px;font-size:14.5px;line-height:29.0px;color:#333;letter-spacing:-0.12px;">1.39 s</span>
<span style="left:158.50px;top:416.78px;font-size:14.5px;line-height:29.0px;color:#333;letter-spacing:0.414px;">en/</span>
<span style="left:388.20px;top:416.78px;font-size:14.5px;line-height:29.0px;color:#333;letter-spacing:-0.902px;">301</span>
<span style="left:503.50px;top:416.78px;font-size:14.5px;line-height:29.0px;color:#333;letter-spacing:0.214px;">document / R<i style="margin-left:0.2px">…</i></span>
<span style="left:618.70px;top:416.78px;font-size:14.5px;line-height:29.0px;color:#333;letter-spacing:0.184px;"><u>buy.sometimesla</u><i style="margin-left:0.23px">…</i></span>
<span style="left:763.37px;top:416.78px;font-size:14.5px;line-height:29.0px;color:#333;letter-spacing:-0.12px;">785 B</span>
<span style="left:834.98px;top:416.78px;font-size:14.5px;line-height:29.0px;color:#333;letter-spacing:-0.12px;">37 ms</span>
<span style="left:158.50px;top:443.03px;font-size:14.5px;line-height:29.0px;color:#333;letter-spacing:0.414px;">en/</span>
<span style="left:388.20px;top:443.03px;font-size:14.5px;line-height:29.0px;color:#333;letter-spacing:-0.502px;">302</span>
<span style="left:503.50px;top:443.03px;font-size:14.5px;line-height:29.0px;color:#333;letter-spacing:0.214px;">document / R<i style="margin-left:0.2px">…</i></span>
<span style="left:618.70px;top:443.03px;font-size:14.5px;line-height:29.0px;color:#333;letter-spacing:0.184px;"><u>buy.sometimesla</u><i style="margin-left:0.23px">…</i></span>
<span style="left:763.37px;top:443.03px;font-size:14.5px;line-height:29.0px;color:#333;letter-spacing:-0.12px;">556 B</span>
<span style="left:827.04px;top:443.03px;font-size:14.5px;line-height:29.0px;color:#333;letter-spacing:-0.12px;">971 ms</span>
<span style="left:158.50px;top:469.28px;font-size:14.5px;line-height:29.0px;color:#333;letter-spacing:0.414px;">en/</span>
<span style="left:388.20px;top:469.28px;font-size:14.5px;line-height:29.0px;color:#333;letter-spacing:-0.902px;">301</span>
<span style="left:503.50px;top:469.28px;font-size:14.5px;line-height:29.0px;color:#333;letter-spacing:0.214px;">document / R<i style="margin-left:0.2px">…</i></span>
<span style="left:618.70px;top:469.28px;font-size:14.5px;line-height:29.0px;color:#333;letter-spacing:0.184px;"><u>buy.sometimesla</u><i style="margin-left:0.23px">…</i></span>
<span style="left:763.37px;top:469.28px;font-size:14.5px;line-height:29.0px;color:#333;letter-spacing:-0.12px;">781 B</span>
<span style="left:834.98px;top:469.28px;font-size:14.5px;line-height:29.0px;color:#333;letter-spacing:-0.12px;">32 ms</span>
<span style="left:158.50px;top:495.53px;font-size:14.5px;line-height:29.0px;color:#333;letter-spacing:0.414px;">en/</span>
<span style="left:388.20px;top:495.53px;font-size:14.5px;line-height:29.0px;color:#333;letter-spacing:-0.502px;">302</span>
<span style="left:503.50px;top:495.53px;font-size:14.5px;line-height:29.0px;color:#333;letter-spacing:0.214px;">document / R<i style="margin-left:0.2px">…</i></span>
<span style="left:618.70px;top:495.53px;font-size:14.5px;line-height:29.0px;color:#333;letter-spacing:0.184px;"><u>buy.sometimesla</u><i style="margin-left:0.23px">…</i></span>
<span style="left:763.37px;top:495.53px;font-size:14.5px;line-height:29.0px;color:#333;letter-spacing:-0.12px;">559 B</span>
<span style="left:835.10px;top:495.53px;font-size:14.5px;line-height:29.0px;color:#333;letter-spacing:-0.12px;">1.48 s</span>
<span style="left:158.50px;top:521.78px;font-size:14.5px;line-height:29.0px;color:#333;letter-spacing:0.414px;">en/</span>
<span style="left:388.20px;top:521.78px;font-size:14.5px;line-height:29.0px;color:#333;letter-spacing:-0.902px;">301</span>
<span style="left:503.50px;top:521.78px;font-size:14.5px;line-height:29.0px;color:#333;letter-spacing:0.214px;">document / R<i style="margin-left:0.2px">…</i></span>
<span style="left:618.70px;top:521.78px;font-size:14.5px;line-height:29.0px;color:#333;letter-spacing:0.184px;"><u>buy.sometimesla</u><i style="margin-left:0.23px">…</i></span>
<span style="left:763.37px;top:521.78px;font-size:14.5px;line-height:29.0px;color:#333;letter-spacing:-0.12px;">785 B</span>
<span style="left:834.98px;top:521.78px;font-size:14.5px;line-height:29.0px;color:#333;letter-spacing:-0.12px;">39 ms</span>
<span style="left:158.50px;top:548.03px;font-size:14.5px;line-height:29.0px;color:#ad2a3a;letter-spacing:0.414px;">en/</span>
<span style="left:388.20px;top:548.03px;font-size:14.5px;line-height:29.0px;color:#ad2a3a;letter-spacing:0.067px;">(failed)</span>
<span style="left:503.50px;top:548.03px;font-size:14.5px;line-height:29.0px;color:#ad2a3a;letter-spacing:0.459px;">document</span>
<span style="left:618.70px;top:548.03px;font-size:14.5px;line-height:29.0px;color:#ad2a3a;letter-spacing:0.184px;"><u>buy.sometimesla</u><i style="margin-left:0.23px">…</i></span>
<span style="left:779.27px;top:548.03px;font-size:14.5px;line-height:29.0px;color:#ad2a3a;letter-spacing:-0.12px;">0 B</span>
<span style="left:835.10px;top:548.03px;font-size:14.5px;line-height:29.0px;color:#ad2a3a;letter-spacing:-0.12px;">2.12 s</span>
<span style="left:158.50px;top:574.28px;font-size:14.5px;line-height:29.0px;color:#333;letter-spacing:0.159px;">data:image/png;base<i style="margin-left:0.25px">…</i></span>
<span style="left:388.20px;top:574.28px;font-size:14.5px;line-height:29.0px;color:#8a8a8a;letter-spacing:-0.402px;">200</span>
<span style="left:503.50px;top:574.28px;font-size:14.5px;line-height:29.0px;color:#333;letter-spacing:0.598px;">png</span>
<span style="left:618.70px;top:574.28px;font-size:14.5px;line-height:29.0px;color:#333;letter-spacing:0.551px;"><u>chrome-error://c</u><i style="margin-left:-0.14px">…</i></span>
<span style="left:757.70px;top:574.28px;font-size:14.5px;line-height:29.0px;color:#8a8a8a;letter-spacing:-0.342px;">(me<i style="margin-left:0.75px">…</i></span>
<span style="left:842.94px;top:574.28px;font-size:14.5px;line-height:29.0px;color:#333;letter-spacing:-0.12px;">0 ms</span>
<span style="left:158.50px;top:600.53px;font-size:14.5px;line-height:29.0px;color:#333;letter-spacing:0.159px;">data:image/png;base<i style="margin-left:0.25px">…</i></span>
<span style="left:388.20px;top:600.53px;font-size:14.5px;line-height:29.0px;color:#8a8a8a;letter-spacing:-0.402px;">200</span>
<span style="left:503.50px;top:600.53px;font-size:14.5px;line-height:29.0px;color:#333;letter-spacing:0.598px;">png</span>
<span style="left:618.70px;top:600.53px;font-size:14.5px;line-height:29.0px;color:#333;letter-spacing:0.551px;"><u>chrome-error://c</u><i style="margin-left:-0.14px">…</i></span>
<span style="left:757.70px;top:600.53px;font-size:14.5px;line-height:29.0px;color:#8a8a8a;letter-spacing:-0.342px;">(me<i style="margin-left:0.75px">…</i></span>
<span style="left:842.94px;top:600.53px;font-size:14.5px;line-height:29.0px;color:#333;letter-spacing:-0.12px;">0 ms</span>
<span style="left:158.50px;top:626.78px;font-size:14.5px;line-height:29.0px;color:#333;letter-spacing:0.159px;">data:image/png;base<i style="margin-left:0.25px">…</i></span>
<span style="left:388.20px;top:626.78px;font-size:14.5px;line-height:29.0px;color:#8a8a8a;letter-spacing:-0.402px;">200</span>
<span style="left:503.50px;top:626.78px;font-size:14.5px;line-height:29.0px;color:#333;letter-spacing:0.598px;">png</span>
<span style="left:618.70px;top:626.78px;font-size:14.5px;line-height:29.0px;color:#333;letter-spacing:0.551px;"><u>chrome-error://c</u><i style="margin-left:-0.14px">…</i></span>
<span style="left:757.70px;top:626.78px;font-size:14.5px;line-height:29.0px;color:#8a8a8a;letter-spacing:-0.342px;">(me<i style="margin-left:0.75px">…</i></span>
<span style="left:842.94px;top:626.78px;font-size:14.5px;line-height:29.0px;color:#333;letter-spacing:-0.12px;">0 ms</span>
<span style="left:158.50px;top:653.03px;font-size:14.5px;line-height:29.0px;color:#333;letter-spacing:0.414px;">en/</span>
<span style="left:388.20px;top:653.03px;font-size:14.5px;line-height:29.0px;color:#333;letter-spacing:-0.502px;">302</span>
<span style="left:503.50px;top:653.03px;font-size:14.5px;line-height:29.0px;color:#333;letter-spacing:0.214px;">document / R<i style="margin-left:0.2px">…</i></span>
<span style="left:618.70px;top:653.03px;font-size:14.5px;line-height:29.0px;color:#8a8a8a;letter-spacing:0.259px;">Other</span>
<span style="left:763.37px;top:653.03px;font-size:14.5px;line-height:29.0px;color:#333;letter-spacing:-0.12px;">558 B</span>
<span style="left:835.10px;top:653.03px;font-size:14.5px;line-height:29.0px;color:#333;letter-spacing:-0.12px;">1.25 s</span>
<span style="left:158.50px;top:679.28px;font-size:14.5px;line-height:29.0px;color:#333;letter-spacing:0.414px;">en/</span>
<span style="left:388.20px;top:679.28px;font-size:14.5px;line-height:29.0px;color:#333;letter-spacing:-0.902px;">301</span>
<span style="left:503.50px;top:679.28px;font-size:14.5px;line-height:29.0px;color:#333;letter-spacing:0.214px;">document / R<i style="margin-left:0.2px">…</i></span>
<span style="left:618.70px;top:679.28px;font-size:14.5px;line-height:29.0px;color:#333;letter-spacing:0.184px;"><u>buy.sometimesla</u><i style="margin-left:0.23px">…</i></span>
<span style="left:763.37px;top:679.28px;font-size:14.5px;line-height:29.0px;color:#333;letter-spacing:-0.12px;">787 B</span>
<span style="left:834.98px;top:679.28px;font-size:14.5px;line-height:29.0px;color:#333;letter-spacing:-0.12px;">69 ms</span>
<span style="left:158.50px;top:705.53px;font-size:14.5px;line-height:29.0px;color:#333;letter-spacing:0.414px;">en/</span>
<span style="left:388.20px;top:705.53px;font-size:14.5px;line-height:29.0px;color:#333;letter-spacing:-0.502px;">302</span>
<span style="left:503.50px;top:705.53px;font-size:14.5px;line-height:29.0px;color:#333;letter-spacing:0.214px;">document / R<i style="margin-left:0.2px">…</i></span>
<span style="left:618.70px;top:705.53px;font-size:14.5px;line-height:29.0px;color:#333;letter-spacing:0.184px;"><u>buy.sometimesla</u><i style="margin-left:0.23px">…</i></span>
<span style="left:763.37px;top:705.53px;font-size:14.5px;line-height:29.0px;color:#333;letter-spacing:-0.12px;">558 B</span>
<span style="left:827.04px;top:705.53px;font-size:14.5px;line-height:29.0px;color:#333;letter-spacing:-0.12px;">997 ms</span>
<span style="left:158.50px;top:731.78px;font-size:14.5px;line-height:29.0px;color:#333;letter-spacing:0.414px;">en/</span>
<span style="left:388.20px;top:731.78px;font-size:14.5px;line-height:29.0px;color:#333;letter-spacing:-0.902px;">301</span>
<span style="left:503.50px;top:731.78px;font-size:14.5px;line-height:29.0px;color:#333;letter-spacing:0.214px;">document / R<i style="margin-left:0.2px">…</i></span>
<span style="left:618.70px;top:731.78px;font-size:14.5px;line-height:29.0px;color:#333;letter-spacing:0.184px;"><u>buy.sometimesla</u><i style="margin-left:0.23px">…</i></span>
<span style="left:763.37px;top:731.78px;font-size:14.5px;line-height:29.0px;color:#333;letter-spacing:-0.12px;">783 B</span>
<span style="left:834.98px;top:731.78px;font-size:14.5px;line-height:29.0px;color:#333;letter-spacing:-0.12px;">32 ms</span>
<span style="left:158.50px;top:758.03px;font-size:14.5px;line-height:29.0px;color:#333;letter-spacing:0.414px;">en/</span>
<span style="left:388.20px;top:758.03px;font-size:14.5px;line-height:29.0px;color:#333;letter-spacing:-0.502px;">302</span>
<span style="left:503.50px;top:758.03px;font-size:14.5px;line-height:29.0px;color:#333;letter-spacing:0.214px;">document / R<i style="margin-left:0.2px">…</i></span>
<span style="left:618.70px;top:758.03px;font-size:14.5px;line-height:29.0px;color:#333;letter-spacing:0.184px;"><u>buy.sometimesla</u><i style="margin-left:0.23px">…</i></span>
<span style="left:763.37px;top:758.03px;font-size:14.5px;line-height:29.0px;color:#333;letter-spacing:-0.12px;">557 B</span>
<span style="left:835.10px;top:758.03px;font-size:14.5px;line-height:29.0px;color:#333;letter-spacing:-0.12px;">1.33 s</span>
<span style="left:158.50px;top:784.28px;font-size:14.5px;line-height:29.0px;color:#333;letter-spacing:0.414px;">en/</span>
<span style="left:388.20px;top:784.28px;font-size:14.5px;line-height:29.0px;color:#333;letter-spacing:-0.902px;">301</span>
<span style="left:503.50px;top:784.28px;font-size:14.5px;line-height:29.0px;color:#333;letter-spacing:0.214px;">document / R<i style="margin-left:0.2px">…</i></span>
<span style="left:618.70px;top:784.28px;font-size:14.5px;line-height:29.0px;color:#333;letter-spacing:0.184px;"><u>buy.sometimesla</u><i style="margin-left:0.23px">…</i></span>
<span style="left:763.37px;top:784.28px;font-size:14.5px;line-height:29.0px;color:#333;letter-spacing:-0.12px;">789 B</span>
<span style="left:834.98px;top:784.28px;font-size:14.5px;line-height:29.0px;color:#333;letter-spacing:-0.12px;">33 ms</span>
<span style="left:158.50px;top:810.53px;font-size:14.5px;line-height:29.0px;color:#333;letter-spacing:0.414px;">en/</span>
<span style="left:388.20px;top:810.53px;font-size:14.5px;line-height:29.0px;color:#333;letter-spacing:-0.502px;">302</span>
<span style="left:503.50px;top:810.53px;font-size:14.5px;line-height:29.0px;color:#333;letter-spacing:0.214px;">document / R<i style="margin-left:0.2px">…</i></span>
<span style="left:618.70px;top:810.53px;font-size:14.5px;line-height:29.0px;color:#333;letter-spacing:0.184px;"><u>buy.sometimesla</u><i style="margin-left:0.23px">…</i></span>
<span style="left:763.37px;top:810.53px;font-size:14.5px;line-height:29.0px;color:#333;letter-spacing:-0.12px;">559 B</span>
<span style="left:835.10px;top:810.53px;font-size:14.5px;line-height:29.0px;color:#333;letter-spacing:-0.12px;">1.30 s</span>
<span style="left:158.50px;top:836.78px;font-size:14.5px;line-height:29.0px;color:#333;letter-spacing:0.414px;">en/</span>
<span style="left:388.20px;top:836.78px;font-size:14.5px;line-height:29.0px;color:#333;letter-spacing:-0.902px;">301</span>
<span style="left:503.50px;top:836.78px;font-size:14.5px;line-height:29.0px;color:#333;letter-spacing:0.214px;">document / R<i style="margin-left:0.2px">…</i></span>
<span style="left:618.70px;top:836.78px;font-size:14.5px;line-height:29.0px;color:#333;letter-spacing:0.184px;"><u>buy.sometimesla</u><i style="margin-left:0.23px">…</i></span>
<span style="left:763.37px;top:836.78px;font-size:14.5px;line-height:29.0px;color:#333;letter-spacing:-0.12px;">777 B</span>
<span style="left:828.12px;top:836.78px;font-size:14.5px;line-height:29.0px;color:#333;letter-spacing:-0.12px;">114 ms</span>
<span style="left:158.50px;top:863.03px;font-size:14.5px;line-height:29.0px;color:#ad2a3a;letter-spacing:0.414px;">en/</span>
<span style="left:388.20px;top:863.03px;font-size:14.5px;line-height:29.0px;color:#ad2a3a;letter-spacing:-0.134px;">(canceled)</span>
<span style="left:503.50px;top:863.03px;font-size:14.5px;line-height:29.0px;color:#ad2a3a;letter-spacing:0.459px;">document</span>
<span style="left:618.70px;top:863.03px;font-size:14.5px;line-height:29.0px;color:#ad2a3a;letter-spacing:0.184px;"><u>buy.sometimesla</u><i style="margin-left:0.23px">…</i></span>
<span style="left:779.27px;top:863.03px;font-size:14.5px;line-height:29.0px;color:#ad2a3a;letter-spacing:-0.12px;">0 B</span>
<span style="left:827.04px;top:863.03px;font-size:14.5px;line-height:29.0px;color:#ad2a3a;letter-spacing:-0.12px;">945 ms</span>
<span style="left:908.80px;top:230.98px;font-size:14.5px;line-height:29.0px;color:#8f949c;letter-spacing:-1.474px;">2 ms</span>
<span style="left:103.00px;top:6.08px;font-size:14.5px;line-height:29.0px;color:#5a5e63;letter-spacing:-0.208px;">Elements</span>
<span style="left:192.50px;top:6.08px;font-size:14.5px;line-height:29.0px;color:#5a5e63;letter-spacing:-0.284px;">Sources</span>
<span style="left:274.00px;top:6.08px;font-size:14.5px;line-height:29.0px;color:#5a5e63;letter-spacing:-0.117px;">Console</span>
<span style="left:357.00px;top:6.08px;font-size:14.5px;line-height:29.0px;color:#5a5e63;letter-spacing:0.325px;">Memory</span>
<span style="left:441.50px;top:6.08px;font-size:14.5px;line-height:29.0px;color:#333;letter-spacing:0.469px;">Network</span>
<span style="left:528.30px;top:6.08px;font-size:14.5px;line-height:29.0px;color:#5a5e63;letter-spacing:-0.062px;">Performance</span>
<span style="left:641.00px;top:6.08px;font-size:14.5px;line-height:29.0px;color:#5a5e63;letter-spacing:0.306px;">Application</span>
<span style="left:870.20px;top:5.98px;font-size:14.5px;line-height:29.0px;color:#6b6b6b;letter-spacing:0.0px;">1</span>
<span style="left:14.00px;top:40.18px;font-size:14.5px;line-height:29.0px;color:#333;letter-spacing:-0.591px;">Search</span>
<span style="left:324.00px;top:40.18px;font-size:14.5px;line-height:29.0px;color:#333;letter-spacing:-0.128px;">Preserve log</span>
<span style="left:452.00px;top:40.18px;font-size:14.5px;line-height:29.0px;color:#333;letter-spacing:-0.132px;">Disable cache</span>
<span style="left:557.00px;top:40.18px;font-size:14.5px;line-height:29.0px;color:#333;letter-spacing:0.526px;">No throttling</span>
<span style="left:13.30px;top:73.78px;font-size:14.5px;line-height:29.0px;color:#505255;letter-spacing:-0.947px;font-weight:700;">Aa</span>
<span style="left:52.00px;top:73.78px;font-size:14.5px;line-height:29.0px;color:#505255;letter-spacing:-0.172px;font-weight:700;">.*</span>
</div>
</body></html>
